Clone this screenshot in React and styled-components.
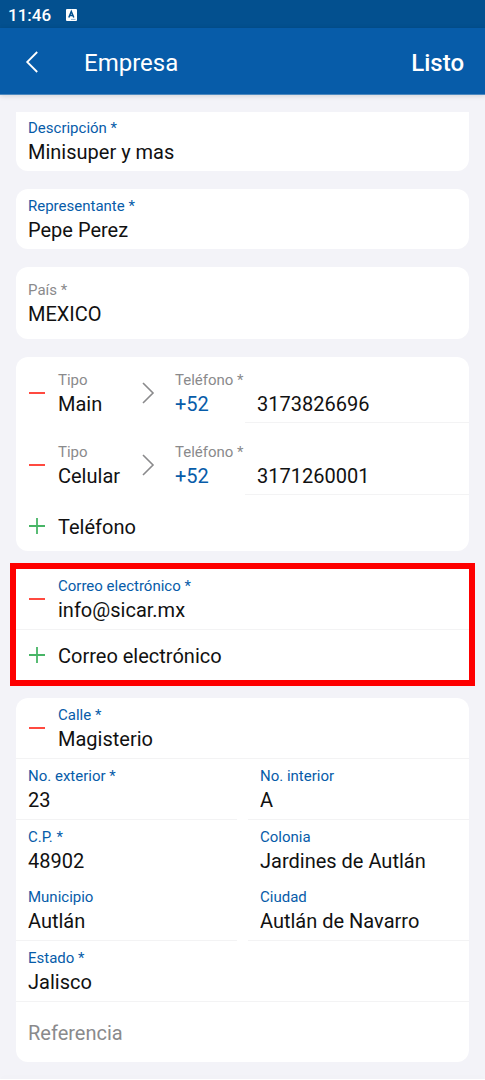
import React, { useId } from "react";
import styled, { createGlobalStyle } from "styled-components";

const blue = "#075ca9";
const gray = "#8a8a8c";
const line = "#f3f3f4";

const GlobalStyle = createGlobalStyle`
  *, *::before, *::after { box-sizing: border-box; }
  body {
    margin: 0;
    background: #f3f3f8;
    color: #111;
    font-family: Roboto, "Liberation Sans", sans-serif;
  }
  button, input { font: inherit; color: inherit; }
`;

const Page = styled.div`
  display: flex;
  flex-direction: column;
  min-height: 100vh;
`;

const StatusBar = styled.div`
  display: flex;
  align-items: center;
  gap: 14px;
  height: 28px;
  padding: 2px 8px 0;
  background: #03508f;
  color: #fff;
  font-size: 17px;
  font-weight: 500;
  line-height: 20px;
`;

const Header = styled.header`
  display: flex;
  align-items: center;
  height: 67px;
  padding: 2px 21px 0;
  border-bottom: 1px solid #4c88bf;
  background: ${blue};
  box-shadow: 0 1px 5px rgba(0, 0, 0, 0.14);
  color: #fff;
  font-size: 24px;
  line-height: 32px;
`;

const PlainButton = styled.button`
  display: flex;
  align-items: center;
  margin: 0;
  padding: 0;
  border: 0;
  background: none;
  text-align: left;
  cursor: pointer;
`;

const BackButton = styled(PlainButton)`
  justify-content: center;
  width: 21px;
  height: 48px;
`;

const Title = styled.h1`
  flex: 1;
  margin: 0 0 0 42px;
  padding-top: 2px;
  font-size: 24px;
  font-weight: 400;
`;

const DoneButton = styled(PlainButton)`
  height: 48px;
  padding-top: 2px;
  font-weight: 500;
`;

const Form = styled.form`
  display: flex;
  flex: 1;
  flex-direction: column;
  gap: 18px;
  padding: 17px 16px;
`;

const Card = styled.section`
  border-radius: ${(p) => (p.$clipped ? "0 0 12px 12px" : "12px")};
  background: #fff;
  overflow: hidden;
`;

const HighlightedCard = styled(Card)`
  border-radius: 0;
  outline: 6px solid #fe0000;
`;

const FieldBox = styled.div`
  display: flex;
  flex: 1;
  flex-direction: column;
  min-width: 0;
  padding: ${(p) => p.$top ?? 8}px 0 4px 12px;
  border-bottom: ${(p) => (p.$line ? `1px solid ${line}` : "0")};
`;

const Label = styled.label`
  color: ${(p) => (p.$muted ? gray : blue)};
  font-size: 15px;
  line-height: 18px;
  white-space: nowrap;
`;

const Input = styled.input`
  width: 100%;
  height: 30px;
  padding: 0;
  border: 0;
  outline: 0;
  background: none;
  font-size: 20px;
  line-height: 30px;
  &::placeholder { color: ${gray}; opacity: 1; }
`;

const ReferenceInput = styled(Input)`
  display: block;
  height: 60px;
  padding: 2px 12px 0;
`;

const Row = styled.div`
  display: flex;
  border-bottom: ${(p) => (p.$line ? `1px solid ${line}` : "0")};
`;

const IconButton = styled(PlainButton)`
  flex: none;
  padding-left: 12px;
  width: 30px;
`;

const Columns = styled.div`
  display: grid;
  grid-template-columns: 1fr 1fr;
  gap: 11px;
`;

const AddButton = styled(PlainButton)`
  gap: 12px;
  width: 100%;
  height: 50px;
  padding-left: 12px;
  font-size: 20px;
  line-height: 30px;
`;

const AddText = styled.span`
  padding-top: 2px;
`;

const PhoneRow = styled.div`
  display: flex;
  height: 72px;
`;

const ChoiceButton = styled(PlainButton)`
  flex-direction: column;
  align-items: flex-start;
  width: ${(p) => (p.$wide ? "100%" : "95px")};
  padding: 14px 0 10px 12px;
`;

const Choice = styled.span`
  color: ${(p) => (p.$link ? blue : "inherit")};
  font-size: 20px;
  line-height: 30px;
`;

const ChevronSlot = styled.span`
  display: flex;
  align-items: center;
  width: 22px;
`;

const PhoneField = styled.div`
  display: grid;
  grid-template-columns: 70px 1fr;
  grid-template-rows: 18px 34px;
  flex: 1;
  padding-top: 14px;
  margin-left: 12px;
`;

const CodeButton = styled(PlainButton)`
  align-items: flex-start;
`;

const NumberBox = styled.div`
  padding-left: 12px;
  border-bottom: 1px solid ${line};
`;

const PhoneLabel = styled(Label)`
  grid-column: 1 / -1;
`;

const BottomBar = styled.footer`
  height: 1px;
  background: #fff;
  box-shadow: 0 -1px 6px rgba(0, 0, 0, 0.05);
`;

function KeyboardBadge() {
  return (
    <svg width="13" height="13" viewBox="0 0 13 13" aria-hidden="true">
      <rect x="1" width="11" height="12" rx="1" fill="#fff" />
      <path d="M3.800 8.500L6.300 2.500L8.800 8.500M4.800 6.600H7.800" fill="none" stroke="#03508f" strokeWidth="1.5" />
      <path d="M6 10.400h4.500" stroke="#6c9cc4" strokeWidth="0.8" />
    </svg>
  );
}

function Minus() {
  return (
    <svg width="18" height="18" viewBox="0 0 18 18" aria-hidden="true">
      <path d="M1 9h16" stroke="#ff4a40" strokeWidth="2" />
    </svg>
  );
}

function Plus() {
  return (
    <svg width="18" height="18" viewBox="0 0 18 18" aria-hidden="true">
      <path d="M1 9h16M9 1v16" stroke="#48b566" strokeWidth="1.8" />
    </svg>
  );
}

function Chevron() {
  return (
    <svg width="14" height="24" viewBox="0 0 14 24" fill="none" aria-hidden="true">
      <path d="M2 2l10 10L2 22" stroke="#8a8a8c" strokeWidth="1.6" />
    </svg>
  );
}

function Field({ label, value, line: hasLine, top, type = "text" }) {
  const id = useId();
  return (
    <FieldBox $line={hasLine} $top={top}>
      <Label htmlFor={id}>{label}</Label>
      <Input id={id} type={type} defaultValue={value} />
    </FieldBox>
  );
}

function Phone({ kind, number }) {
  const id = useId();
  return (
    <PhoneRow>
      <IconButton type="button" aria-label="Eliminar teléfono">
        <Minus />
      </IconButton>
      <ChoiceButton type="button">
        <Label as="span" $muted>Tipo</Label>
        <Choice>{kind}</Choice>
      </ChoiceButton>
      <ChevronSlot>
        <Chevron />
      </ChevronSlot>
      <PhoneField>
        <PhoneLabel htmlFor={id} $muted>Teléfono *</PhoneLabel>
        <CodeButton type="button">
          <Choice $link>+52</Choice>
        </CodeButton>
        <NumberBox>
          <Input id={id} type="tel" defaultValue={number} />
        </NumberBox>
      </PhoneField>
    </PhoneRow>
  );
}

export default function App() {
  return (
    <Page>
      <GlobalStyle />
      <StatusBar>
        <span>11:46</span>
        <KeyboardBadge />
      </StatusBar>
      <Header>
        <BackButton type="button" aria-label="Volver">
          <svg width="14" height="22" viewBox="0 0 14 22" fill="none" aria-hidden="true">
            <path d="M12.200 1L2.200 11l10 10" stroke="#fff" strokeWidth="1.8" />
          </svg>
        </BackButton>
        <Title>Empresa</Title>
        <DoneButton type="submit" form="company">Listo</DoneButton>
      </Header>
      <Form id="company" onSubmit={(e) => e.preventDefault()}>
        <Card $clipped>
          <Field label="Descripción *" value="Minisuper y mas" top={7} />
        </Card>
        <Card>
          <Field label="Representante *" value="Pepe Perez" />
        </Card>
        <Card>
          <ChoiceButton type="button" $wide>
            <Label as="span" $muted>País *</Label>
            <Choice>MEXICO</Choice>
          </ChoiceButton>
        </Card>
        <Card>
          <Phone kind="Main" number="3173826696" />
          <Phone kind="Celular" number="3171260001" />
          <AddButton type="button">
            <Plus />
            <AddText>Teléfono</AddText>
          </AddButton>
        </Card>
        <HighlightedCard>
          <Row $line>
            <IconButton type="button" aria-label="Eliminar correo electrónico">
              <Minus />
            </IconButton>
            <Field label="Correo electrónico *" value="info@sicar.mx" type="email" />
          </Row>
          <AddButton type="button">
            <Plus />
            <AddText>Correo electrónico</AddText>
          </AddButton>
        </HighlightedCard>
        <Card>
          <Row $line>
            <IconButton type="button" aria-label="Eliminar dirección">
              <Minus />
            </IconButton>
            <Field label="Calle *" value="Magisterio" />
          </Row>
          <Columns>
            <Field label="No. exterior *" value="23" line />
            <Field label="No. interior" value="A" line />
          </Columns>
          <Columns>
            <Field label="C.P. *" value="48902" />
            <Field label="Colonia" value="Jardines de Autlán" />
          </Columns>
          <Columns>
            <Field label="Municipio" value="Autlán" line />
            <Field label="Ciudad" value="Autlán de Navarro" line />
          </Columns>
          <Field label="Estado *" value="Jalisco" line />
          <ReferenceInput type="text" placeholder="Referencia" aria-label="Referencia" />
        </Card>
      </Form>
      <BottomBar />
    </Page>
  );
}
